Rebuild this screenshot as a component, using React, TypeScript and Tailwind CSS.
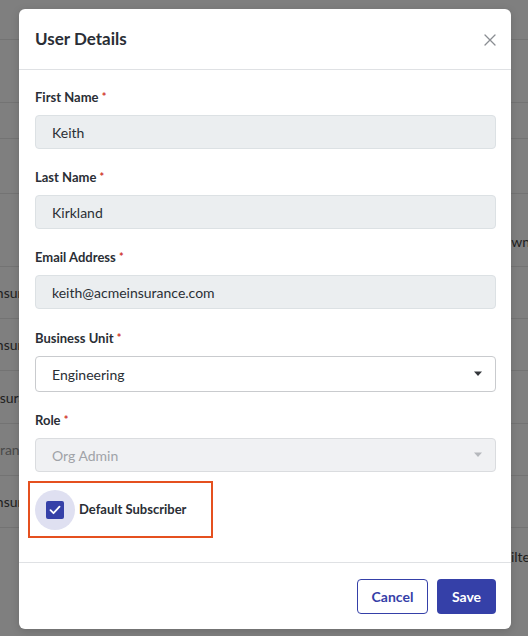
import React from "react";

const font = { fontFamily: "Lato, 'Open Sans', sans-serif" };

const Label = ({ text }: { text: string }) => (
  <p className="h-[18px] mb-[9px] text-[13px] leading-[18px] font-bold text-[#2a2e35]">
    {text} <span className="text-[#d0342c] text-[11px] align-top">*</span>
  </p>
);

const ReadOnlyField = ({ label, value, gap = "mb-[19px]" }: { label: string; value: string; gap?: string }) => (
  <div className={gap}>
    <Label text={label} />
    <div className="h-[34px] flex items-center px-4 rounded-[4px] border border-[#dce1e4] bg-[#ebeef0] text-[14px] text-[#2a2e35]">
      {value}
    </div>
  </div>
);

const Caret = ({ color }: { color: string }) => (
  <svg width="10" height="6" viewBox="0 0 10 6">
    <path d="M1 0.5h8L5 5z" fill={color} />
  </svg>
);

const SelectField = ({ label, value, disabled }: { label: string; value: string; disabled?: boolean }) => (
  <div className={disabled ? "mb-[9px]" : "mb-[19px]"}>
    <Label text={label} />
    <div
      className={
        disabled
          ? "h-[34px] flex items-center justify-between pl-4 pr-[12px] rounded-[4px] border border-[#dadcdf] bg-[#f0f1f3] text-[14px] text-[#a0a3a8]"
          : "h-[36px] flex items-center justify-between pl-4 pr-[12px] rounded-[4px] border border-[#c9cbce] bg-white text-[14px] text-[#2a2e35]"
      }
    >
      <span>{value}</span>
      <Caret color={disabled ? "#b5b8bc" : "#33363b"} />
    </div>
  </div>
);

const rows: { h: number; left?: string; leftCls?: string }[] = [
  { h: 40 },
  { h: 63 },
  { h: 36 },
  { h: 55 },
  { h: 73 },
  { h: 52, left: "Insurance", leftCls: "ml-[-8px]" },
  { h: 52, left: "Insurance", leftCls: "ml-[-8px]" },
  { h: 53, left: "Insurance", leftCls: "ml-[-12px]" },
  { h: 52, left: "Acmeinsurance", leftCls: "ml-[-60px] text-[#4a4a4a]" },
  { h: 52, left: "Insurance", leftCls: "ml-[-8px]" },
];

export default function App() {
  return (
    <div className="relative w-[528px] h-[636px] overflow-hidden bg-[#7f7f7f]" style={font}>
      {/* dimmed page behind */}
      <div className="flex flex-col">
        {rows.map((r, i) => (
          <div
            key={i}
            className="flex items-center border-b border-[#737373] text-[14px] text-[#1e1e1e] whitespace-nowrap"
            style={{ height: r.h }}
          >
            {r.left && <span className={r.leftCls}>{r.left}</span>}
          </div>
        ))}
      </div>
      <span className="absolute left-[500px] top-[231px] text-[14px] text-[#1e1e1e]">Own</span>
      <span className="absolute left-[503px] top-[546px] text-[14px] text-[#1e1e1e]">Filter</span>

      {/* modal */}
      <div className="absolute left-[19px] top-[9px] w-[492px] h-[620px] flex flex-col bg-white rounded-[6px] shadow-[0_2px_8px_rgba(0,0,0,0.15)]">
        <div className="h-[61px] flex items-center justify-between pl-4 pr-[15px] border-b border-[#dfe1e4]">
          <h2 className="text-[17px] font-bold text-[#2a2e35]">User Details</h2>
          <svg width="12" height="12" viewBox="0 0 12 12" className="mt-[1px]">
            <path d="M1 1l10 10M11 1L1 11" stroke="#8a8d92" strokeWidth="1.3" strokeLinecap="round" />
          </svg>
        </div>

        <div className="flex-1 flex flex-col pt-[18px] pl-4 pr-[15px]">
          <ReadOnlyField label="First Name" value="Keith" />
          <ReadOnlyField label="Last Name" value="Kirkland" />
          <ReadOnlyField label="Email Address" value="keith@acmeinsurance.com" gap="mb-[20px]" />
          <SelectField label="Business Unit" value="Engineering" />
          <SelectField label="Role" value="Org Admin" disabled />

          <div className="ml-[-7px] w-[185px] h-[57px] flex items-center pl-[5px] border-2 border-[#e5501f]">
            <div className="w-[40px] h-[40px] rounded-full bg-[#dfe0f1] flex items-center justify-center">
              <div className="w-[18px] h-[18px] rounded-[2px] bg-[#3540a8] flex items-center justify-center">
                <svg width="12" height="10" viewBox="0 0 12 10">
                  <path d="M1.5 5.2l3 3 6-6.5" fill="none" stroke="white" strokeWidth="1.8" strokeLinecap="round" strokeLinejoin="round" />
                </svg>
              </div>
            </div>
            <span className="ml-[4px] text-[13px] font-bold text-[#2a2e35]">Default Subscriber</span>
          </div>
        </div>

        <div className="h-[67px] flex items-center justify-end gap-[9px] pr-[15px] border-t border-[#dfe1e4]">
          <button className="w-[71px] h-[35px] rounded-[4px] border border-[#3540a8] text-[14px] font-bold text-[#3540a8]">
            Cancel
          </button>
          <button className="w-[59px] h-[35px] rounded-[4px] bg-[#3540a8] text-[14px] font-bold text-white">
            Save
          </button>
        </div>
      </div>
    </div>
  );
}
